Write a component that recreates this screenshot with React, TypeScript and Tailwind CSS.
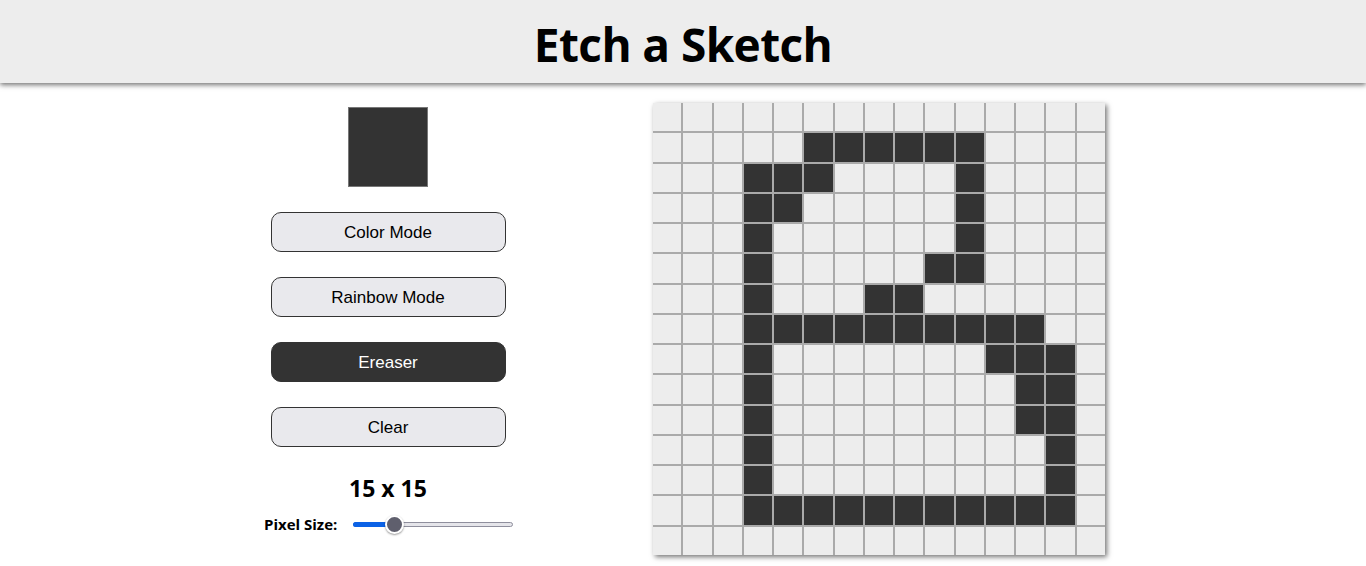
import React from 'react';

const rows = [
  '...............',
  '.....######....',
  '...###....#....',
  '...##.....#....',
  '...#......#....',
  '...#.....##....',
  '...#...##......',
  '...##########..',
  '...#.......###.',
  '...#........##.',
  '...#........##.',
  '...#.........#.',
  '...#.........#.',
  '...###########.',
  '...............',
];

function Button({ label, active }: { label: string; active?: boolean }) {
  return (
    <button
      className={
        active
          ? 'w-[235px] h-[40px] rounded-[10px] border border-[#333] bg-[#333] text-white text-[17px] pt-[2px]'
          : 'w-[235px] h-[40px] rounded-[10px] border border-[#333] bg-[#e9e9ed] text-black text-[17px] pt-[2px]'
      }
      style={{ fontFamily: '"Liberation Sans", Arial, sans-serif' }}
    >
      {label}
    </button>
  );
}

export default function App() {
  return (
    <div className="min-h-[566px] bg-white" style={{ fontFamily: '"Open Sans", "Noto Sans", sans-serif' }}>
      {/* Header */}
      <header className="h-[83px] bg-[#ededed] flex items-center justify-center shadow-[0_2px_5px_rgba(0,0,0,0.55)] relative z-10">
        <h1 className="text-[46px] font-bold text-black tracking-[-0.6px] leading-none pt-[4px]">Etch a Sketch</h1>
      </header>

      <main className="flex justify-center gap-[140px] pt-[20px] pl-[2px]">
        {/* Controls */}
        <div className="w-[250px] shrink-0 flex flex-col items-center pt-[4px]">
          <div className="w-[80px] h-[80px] bg-[#333] border border-[#777]" />
          <div className="flex flex-col gap-[25px] mt-[25px]">
            <Button label="Color Mode" />
            <Button label="Rainbow Mode" />
            <Button label="Ereaser" active />
            <Button label="Clear" />
          </div>
          <div className="mt-[30px] text-[23px] font-bold leading-none text-black">15 x 15</div>
          <div className="mt-[13px] w-full flex items-center pl-[1px]">
            <span className="text-[15px] font-bold text-black whitespace-nowrap">Pixel Size:</span>
            <div className="relative ml-[16px] w-[160px] shrink-0 h-[20px] flex items-center">
              <div className="w-full h-[5px] rounded-full bg-[#e5e5ea] border border-[#8f8f9d]" />
              <div className="absolute left-0 top-[7.5px] w-[40px] h-[5px] rounded-full bg-[#0b62e6]" />
              <div className="absolute left-[32px] top-[0.5px] w-[19px] h-[19px] rounded-full bg-[#5f5f6d] border-2 border-white shadow-[0_1px_2px_rgba(0,0,0,0.4)]" />
            </div>
          </div>
        </div>

        {/* Grid */}
        <div className="w-[452px] h-[452px] shrink-0 grid grid-cols-15 grid-rows-15 gap-[2px] bg-[#aaa] shadow-[2px_2px_5px_rgba(0,0,0,0.55)]">
          {rows.flatMap((row, r) =>
            row.split('').map((c, i) => (
              <div key={`${r}-${i}`} className={c === '#' ? 'bg-[#333]' : 'bg-[#ededed]'} />
            ))
          )}
        </div>
      </main>
    </div>
  );
}
